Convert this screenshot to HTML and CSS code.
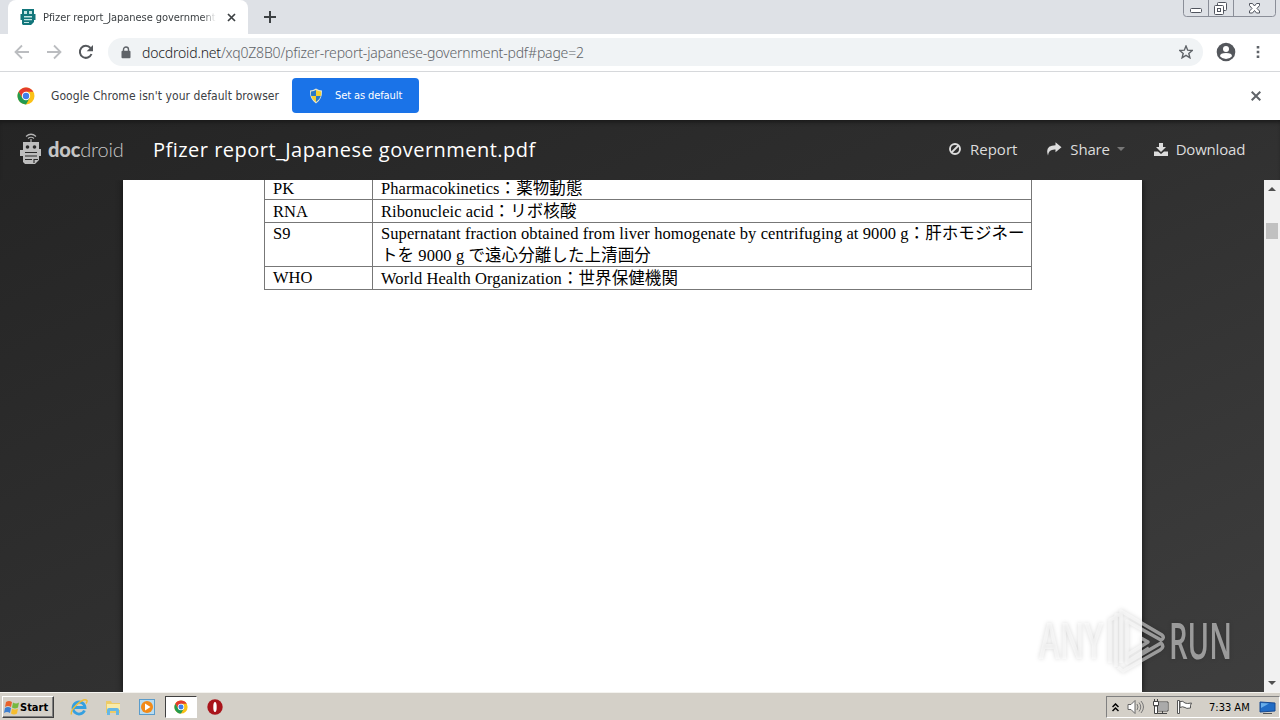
FILE: index.html
```
<!DOCTYPE html>
<html lang="en">
<head>
  <meta charset="utf-8">
  <title>Pfizer report_Japanese government.pdf</title>
  <link rel="stylesheet" href="styles.css">
</head>
<body>
  <div class="tabstrip">
    <div class="tab">
      <svg class="favicon" width="16" height="18" viewBox="0 0 16 18">
        <path d="M2 1h12v5h1.500v6H14v2l-3 3H3l-1-1v-4H.5V6H2z" fill="#13767b"/>
        <path d="M4 3h3v3H4zM9 3h3v3H9zM4 8h8v1.500H4zM4 11h8v1.300H4zM4 14h5v1H4z" fill="#c4e5e4"/>
      </svg>
      <span class="tab-title">Pfizer report_Japanese government</span>
      <svg class="tab-close" width="9" height="9" viewBox="0 0 9 9"><path d="M1 1l7 7M8 1L1 8" stroke="#3c4043" stroke-width="1.700"/></svg>
    </div>
    <svg class="new-tab" width="12" height="12" viewBox="0 0 12 12"><path d="M6 0v12M0 6h12" stroke="#3c4043" stroke-width="2"/></svg>
    <svg class="window-buttons" width="93" height="17" viewBox="0 0 93 17">
      <path d="M.5 0v13.500q0 3 3 3h86q3 0 3-3V0M25.500 0v16M50.500 0v16" fill="none" stroke="#8a8e98"/>
      <g fill="#fff" stroke="#50545e">
        <rect x="7.500" y="8.500" width="11" height="4" rx="1"/>
        <rect x="34.500" y="2.500" width="9" height="8" rx="1"/>
        <rect x="31.500" y="5.500" width="9" height="9" rx="1"/>
        <rect x="34.500" y="8.500" width="3" height="3"/>
        <path d="M66.500 3.500h3l2 2.500 2-2.500h3v2L74 8.500l2.500 2.500v2h-3l-2-2.500-2 2.500h-3v-2l2.500-2.500-2.500-3z"/>
      </g>
    </svg>
  </div>

  <div class="toolbar">
    <svg class="nav-icon" width="16" height="16" viewBox="0 0 16 16"><path d="M15 8H2M8 1.500L1.500 8 8 14.500" fill="none" stroke="#bbbdc0" stroke-width="1.800"/></svg>
    <svg class="nav-icon" width="16" height="16" viewBox="0 0 16 16"><path d="M1 8h13M8 1.500L14.500 8 8 14.500" fill="none" stroke="#bbbdc0" stroke-width="1.800"/></svg>
    <svg class="nav-icon" width="16" height="16" viewBox="0 0 16 16"><path d="M13.500 10A6 6 0 1 1 12.500 4" fill="none" stroke="#55585c" stroke-width="2"/><path d="M15 1v6.300H8.700z" fill="#55585c"/></svg>
    <div class="omnibox">
      <svg width="10" height="13" viewBox="0 0 10 13"><path d="M2.500 5V3.500a2.500 2.500 0 0 1 5 0V5" fill="none" stroke="#5f6368" stroke-width="1.400"/><rect x=".5" y="4.800" width="9" height="7.500" rx="1" fill="#5f6368"/></svg>
      <span class="url"><span class="host">docdroid.net</span>/xq0Z8B0/pfizer-report-japanese-government-pdf#page=2</span>
      <svg class="star" width="14" height="14" viewBox="0 0 14 14"><path d="M7 1l1.700 4.200 4.500.300-3.400 2.900 1.100 4.400L7 10.400l-3.900 2.400 1.100-4.400L.8 5.500l4.500-.3z" fill="none" stroke="#5f6368" stroke-width="1.400"/></svg>
    </div>
    <svg class="profile" width="20" height="20" viewBox="0 0 20 20"><circle cx="10" cy="10" r="9.300" fill="#54575c"/><circle cx="10" cy="7" r="3" fill="#fff"/><path d="M4 14.200q0-3.200 6-3.200t6 3.200q-2.200 2.800-6 2.800t-6-2.800z" fill="#fff"/></svg>
    <svg class="menu-dots" width="4" height="14" viewBox="0 0 4 14"><path d="M.7 1h2.600v2.600H.7zM.7 5.700h2.600v2.600H.7zM.7 10.400h2.600V13H.7z" fill="#5f6368"/></svg>
  </div>

  <div class="infobar">
    <svg width="18" height="18" viewBox="0 0 18 18">
      <circle cx="9" cy="9" r="8.500" fill="#fbc116"/>
      <path d="M1.640 4.750A8.500 8.500 0 0 1 16.360 4.750H9L5.300 11z" fill="#e33b2e"/>
      <path d="M1.640 4.750A8.500 8.500 0 0 0 9 17.500L12.700 11 9 13 5.300 11z" fill="#229a50"/>
      <circle cx="9" cy="9" r="4.200" fill="#fff"/><circle cx="9" cy="9" r="3.200" fill="#3f7fea"/>
    </svg>
    <span class="infobar-text">Google Chrome isn't your default browser</span>
    <div class="default-button">
      <svg width="14" height="16" viewBox="0 0 14 16">
        <path d="M7 .5q3 2 6 2Q13.500 11 7 15.500.5 11 1 2.500q3 0 6-2z" fill="#e3e4d0"/>
        <path d="M7 2v6H2.200Q1.800 5.500 2 3.500 5 3.200 7 2zM7 8h4.800Q11 11.500 7 14z" fill="#2878c8"/>
        <path d="M7 2v6h4.800q.4-2.500.2-4.500Q9 3.200 7 2zM7 8H2.200Q3 11.500 7 14z" fill="#f4cf30"/>
      </svg>
      <span>Set as default</span>
    </div>
    <svg class="infobar-close" width="10" height="10" viewBox="0 0 10 10"><path d="M.7.700l8.600 8.600M9.300.700L.7 9.300" stroke="#5f6368" stroke-width="2"/></svg>
  </div>

  <div class="viewer">
    <div class="viewer-header">
      <svg width="22" height="32" viewBox="0 0 22 32">
        <path d="M6 3.500Q11-1 16 3.500M8 5.500q3-2.500 6 0M11 6v4" fill="none" stroke="#b4b4b4" stroke-width="1.200"/>
        <path d="M3 9h16v7h2v7h-2v4l-4 4H5l-2-2v-6H0v-6h3z" fill="#bdbdbd"/>
        <circle cx="7.500" cy="14" r="1.800" fill="#292929"/><circle cx="14.500" cy="14" r="1.800" fill="#292929"/>
        <path d="M5 19.500h12M5 23h12M5 26.500h7M14 30v-3.500h4" fill="none" stroke="#292929" stroke-width="1.100"/>
      </svg>
      <div class="logo-text"><b>doc</b>droid</div>
      <div class="doc-title">Pfizer report_Japanese government.pdf</div>
      <div class="action report">
        <svg width="12" height="12" viewBox="0 0 12 12"><circle cx="6" cy="6" r="5" fill="none" stroke="#dcdcdc" stroke-width="1.900"/><path d="M2.500 9.500l7-7" stroke="#dcdcdc" stroke-width="1.800"/></svg>
        <span>Report</span>
      </div>
      <div class="action share">
        <svg width="16" height="14" viewBox="0 0 16 14"><path d="M9.500.300L15.500 5.300l-6 5V7.500Q2.500 7 2 13.500-1.500 3.500 9.500 3.200z" fill="#dcdcdc"/></svg>
        <span>Share</span>
        <i class="caret"></i>
      </div>
      <div class="action download">
        <svg width="14" height="13" viewBox="0 0 14 13"><path d="M5 0h4v4h3L7 9 2 4h3zM0 8.500h4l3 2.500 3-2.500h4V13H0z" fill="#dcdcdc"/></svg>
        <span>Download</span>
      </div>
    </div>
    <div class="viewer-body">
      <div class="page">
        <table class="terms">
          <tr class="row-pk"><td>PK</td><td><span class="entry">Pharmacokinetics：薬物動態</span></td></tr>
          <tr class="row-rna"><td>RNA</td><td><span class="entry">Ribonucleic acid：リボ核酸</span></td></tr>
          <tr class="row-s9"><td>S9</td><td><span class="entry">Supernatant fraction obtained from liver homogenate by centrifuging at 9000 g：肝ホモジネー</span><br><span class="entry">トを 9000 g で遠心分離した上清画分</span></td></tr>
          <tr class="row-who"><td>WHO</td><td><span class="entry">World Health Organization：世界保健機関</span></td></tr>
        </table>
      </div>
      <div class="scrollbar">
        <i class="arrow up"></i>
        <i class="thumb"></i>
        <i class="arrow down"></i>
      </div>
    </div>
    <svg class="watermark" width="230" height="80" viewBox="0 0 230 80">
      <g class="mark-text" fill="#fff">
        <text x="8" y="56" textLength="64" lengthAdjust="spacingAndGlyphs">ANY</text>
        <text x="138" y="56" textLength="63" lengthAdjust="spacingAndGlyphs">RUN</text>
      </g>
      <g class="mark-logo" fill="none" stroke="#fff" stroke-width="3.500" stroke-linejoin="round">
        <path d="M79 60V17l6-3M85 64V12h4M90 60V8l41 24q3 3-1 5L96 18v42l34-20q4 4-1 7L92 68l-5-4"/>
        <path d="M96 59l22-14M96 52l21-13-7-4"/>
      </g>
    </svg>
  </div>

  <div class="taskbar">
    <div class="start">
      <svg width="16" height="15" viewBox="0 0 16 15"><path d="M2 2q3-2 6 0L7 7Q4 5 1 7z" fill="#e8622c"/><path d="M9 2.500q3 2 6 0l-1 5q-3 2-6 0z" fill="#76b83f"/><path d="M1 8q3-2 6 0l-1 5q-3-2-6 0z" fill="#3d7fd0"/><path d="M8 8.500q3 2 6 0l-1 5q-3 2-6 0z" fill="#f6bd2e"/></svg>
      <span>Start</span>
    </div>
    <svg class="task-icon" width="18" height="18" viewBox="0 0 18 18"><path d="M14.500 12.500A6 6 0 1 1 15 9.500H4" fill="none" stroke="#35a0e0" stroke-width="2.800"/><path d="M1.500 16.500Q0 13 7 6.500T17 2.500q.5 1-1 3" fill="none" stroke="#f0bd35" stroke-width="1.400"/></svg>
    <svg class="task-icon" width="18" height="18" viewBox="0 0 18 18"><path d="M2 3h5l1 2h8v10H2z" fill="#edcb67"/><path d="M3 6h13v6H3z" fill="#f9eba8"/><path d="M3 17v-5q0-2 2-2h8q2 0 2 2v5h-3v-4H6v4z" fill="#65b7e5"/></svg>
    <svg class="task-icon" width="18" height="18" viewBox="0 0 18 18"><rect x="1.500" y="1.500" width="15" height="15" fill="#b8dcf1" stroke="#5a9ccb"/><circle cx="9" cy="9" r="6" fill="#f28a18"/><path d="M7 5.500v7L12.500 9z" fill="#fff"/></svg>
    <div class="task-active">
      <svg width="14" height="14" viewBox="0 0 18 18">
        <circle cx="9" cy="9" r="8.500" fill="#fbc116"/>
        <path d="M1.640 4.750A8.500 8.500 0 0 1 16.360 4.750H9L5.300 11z" fill="#e33b2e"/>
        <path d="M1.640 4.750A8.500 8.500 0 0 0 9 17.500L12.700 11 9 13 5.300 11z" fill="#229a50"/>
        <circle cx="9" cy="9" r="4.200" fill="#fff"/><circle cx="9" cy="9" r="3.200" fill="#3f7fea"/>
      </svg>
    </div>
    <svg class="opera" width="16" height="16" viewBox="0 0 16 16"><circle cx="8" cy="8" r="7.700" fill="#a9141b"/><ellipse cx="8" cy="8" rx="1.700" ry="5" fill="#fff"/></svg>
    <div class="tray">
      <svg width="7" height="9" viewBox="0 0 7 9"><path d="M.5 4l3-3 3 3M.5 8l3-3 3 3" fill="none" stroke="#000" stroke-width="1.500"/></svg>
      <svg class="speaker" width="17" height="14" viewBox="0 0 17 14"><path d="M1 4.500h3l4-4v13l-4-4H1z" fill="#fff" stroke="#666"/><path d="M10 4q2 3 0 6M12 2.500q3.500 4.500 0 9M14 1q5 6 0 12" fill="none" stroke="#777"/></svg>
      <svg class="network" width="17" height="16" viewBox="0 0 17 16"><rect x="4.500" y="3.500" width="11" height="8" fill="#aaa" stroke="#fff"/><path d="M4 3h12v9H4zM10.500 12v2M5 14.500h10" fill="none" stroke="#444"/><path d="M1.500 2.500h5v4h-5zM2.500 0v2M5.500 0v2M2.500 7h3v7.500h-3z" fill="#fff" stroke="#444"/></svg>
      <svg class="flag" width="16" height="16" viewBox="0 0 16 16"><path d="M.5 1.500h2v13h-2zM3 2.500q3-1 5 1.500 2 1 6.500 0Q13 6 13.500 9 9 10 8 8.500 5.500 7 3 8.500z" fill="#fff" stroke="#555"/></svg>
      <span class="clock">7:33 AM</span>
      <svg width="17" height="13" viewBox="0 0 17 13"><path d="M1 1l15 1v8L1 11z" fill="#216cc5" stroke="#184a91"/><path d="M2 2l8 .5L2 7z" fill="#68aeea"/><path d="M4 12.500h9" stroke="#555"/></svg>
    </div>
  </div>
</body>
</html>
```
FILE: styles.css
```
* {
  box-sizing: border-box;
}

body {
  margin: 0;
  width: 1280px;
  height: 720px;
  overflow: hidden;
  display: flex;
  flex-direction: column;
  font-family: "DejaVu Sans Condensed", "DejaVu Sans", sans-serif;
  font-size: 11px;
  color: #3c4043;
}

svg {
  display: block;
  flex: none;
}

span {
  white-space: nowrap;
}

/* browser window */
.tabstrip {
  height: 34px;
  flex: none;
  display: flex;
  background: #dee1e6;
}

.tab {
  width: 240px;
  margin-left: 8px;
  padding: 0 12px;
  display: flex;
  align-items: center;
  background: #fff;
  border-radius: 8px 8px 0 0;
}

.tab-title {
  width: 174px;
  margin-left: 7px;
  overflow: hidden;
  letter-spacing: -0.05px;
  -webkit-mask-image: linear-gradient(90deg, #000 92%, transparent);
  mask-image: linear-gradient(90deg, #000 92%, transparent);
}

.tab-close {
  margin-left: 11px;
}

.new-tab {
  margin: 11px 0 0 16px;
}

.window-buttons {
  margin-left: auto;
  margin-right: 4px;
}

.toolbar {
  height: 38px;
  flex: none;
  display: flex;
  align-items: center;
  padding-left: 14px;
  padding-bottom: 1px;
  background: #fff;
  border-bottom: 1px solid #d6d8db;
}

.nav-icon {
  margin-right: 16px;
}

.omnibox {
  width: 1095px;
  height: 28px;
  margin-left: -2px;
  padding: 0 10px 0 13px;
  display: flex;
  align-items: center;
  border-radius: 14px;
  background: #f0f3f5;
}

.url {
  margin-left: 11px;
  margin-right: auto;
  font-family: "Noto Sans", sans-serif;
  font-weight: 300;
  font-size: 14px;
  letter-spacing: -0.18px;
  color: #5f6368;
}

.host {
  color: #202124;
}

.profile {
  margin-left: 13px;
}

.menu-dots {
  margin-left: 20px;
}

.infobar {
  height: 48px;
  flex: none;
  display: flex;
  align-items: center;
  padding-left: 17px;
  padding-bottom: 1px;
  background: #fff;
}

.infobar-text {
  width: 241px;
  margin-left: 16px;
  font-size: 12px;
  letter-spacing: 0.06px;
}

.default-button {
  width: 127px;
  height: 35px;
  padding-left: 17px;
  display: flex;
  align-items: center;
  gap: 12px;
  background: #1a73e8;
  border-radius: 4px;
  color: #fff;
}

.default-button span {
  letter-spacing: -0.1px;
}

.infobar-close {
  margin-left: auto;
  margin-right: 19px;
}

/* document viewer */
.viewer {
  position: relative;
  height: 572px;
  flex: none;
  background: linear-gradient(155deg, #242424, #303030 50%, #3e3e3e);
  font-family: "Open Sans", sans-serif;
}

.viewer-header {
  height: 60px;
  padding-left: 20px;
  padding-bottom: 2px;
  display: flex;
  align-items: center;
  color: #dcdcdc;
  box-shadow: inset 0 4px 4px -2px #181818;
}

.logo-text {
  width: 105px;
  margin-left: 6px;
  font-family: Lato, sans-serif;
  font-size: 20px;
  font-weight: 300;
  letter-spacing: -0.15px;
  color: #c5c5c5;
}

.logo-text b {
  font-weight: 900;
}

.doc-title {
  width: 796px;
  font-size: 20px;
  font-weight: 500;
  letter-spacing: 0.48px;
  color: #fff;
}

.action {
  display: flex;
  align-items: center;
  font-size: 15px;
}

.action span {
  margin-left: 9px;
}

.share {
  margin-left: 29px;
}

.share span,
.download span {
  margin-left: 8px;
  letter-spacing: -0.2px;
}

.download {
  margin-left: 29px;
}

.caret {
  margin-left: 7px;
  border: 4px solid transparent;
  border-top-color: #777;
  border-bottom: 0;
}

.viewer-body {
  height: 512px;
  display: flex;
}

.page {
  width: 1019px;
  margin-left: 123px;
  overflow: hidden;
  background: #fff;
  box-shadow: 0 0 6px #111;
  clip-path: inset(0 -8px 0 -8px);
}

.terms {
  width: 768px;
  margin: -4px 0 0 141px;
  table-layout: fixed;
  border-collapse: collapse;
  font-family: "Liberation Serif", "Noto Sans CJK JP", serif;
  font-size: 16.5px;
  line-height: 21px;
  color: #000;
}

.terms td {
  padding: 0 0 0 8px;
  border: 1px solid #777;
  vertical-align: top;
}

.terms td:first-child {
  width: 108px;
}

.terms .row-pk td,
.terms .row-rna td,
.terms .row-who td:last-child {
  padding-top: 1px;
}

.entry {
  letter-spacing: 0.08px;
}

.row-pk,
.row-rna,
.row-who {
  height: 23px;
}

.row-s9 {
  height: 44px;
  line-height: 21.5px;
}

.scrollbar {
  width: 16px;
  margin-left: auto;
  display: flex;
  flex-direction: column;
  align-items: center;
  background: #f1f1f1;
}

.arrow {
  border: 4px solid transparent;
}

.up {
  margin-top: 3px;
  border-bottom-color: #505050;
}

.down {
  margin-top: auto;
  margin-bottom: 3px;
  border-top-color: #505050;
}

.thumb {
  width: 12px;
  height: 16px;
  margin-top: 32px;
  background: #c1c1c1;
}

/* watermark lies over the page and the viewer background */
.watermark {
  position: absolute;
  left: 1031px;
  top: 483px;
  filter: drop-shadow(0 0 2px rgba(0, 0, 0, 0.3));
}

.mark-text {
  font-family: "Open Sans", sans-serif;
  font-size: 50px;
  font-weight: 600;
  opacity: 0.5;
}

.mark-logo {
  opacity: 0.5;
}

/* windows taskbar */
.taskbar {
  height: 28px;
  flex: none;
  display: flex;
  align-items: center;
  padding: 1px 0 0 2px;
  background: #d4d0c8;
  border-top: 1px solid #f4f3ef;
  color: #000;
}

.start {
  width: 52px;
  height: 22px;
  padding-left: 1px;
  display: flex;
  align-items: center;
  font-weight: bold;
  border: 1px solid;
  border-color: #fff #404040 #404040 #fff;
  box-shadow: inset -1px -1px #808080;
}

.task-icon {
  margin-left: 16px;
}

.task-active {
  width: 32px;
  height: 22px;
  margin-left: 9px;
  display: flex;
  align-items: center;
  justify-content: center;
  background: #fff;
  border: 1px solid;
  border-color: #404040 #fff #fff #404040;
}

.opera {
  margin-left: 10px;
}

.tray {
  width: 174px;
  height: 22px;
  margin-left: auto;
  padding-left: 5px;
  display: flex;
  align-items: center;
  border: 1px solid;
  border-color: #808080 #fff #fff #808080;
}

.speaker,
.network,
.flag {
  margin-left: 8px;
}

.clock {
  width: 50px;
  margin-left: 16px;
}
```
